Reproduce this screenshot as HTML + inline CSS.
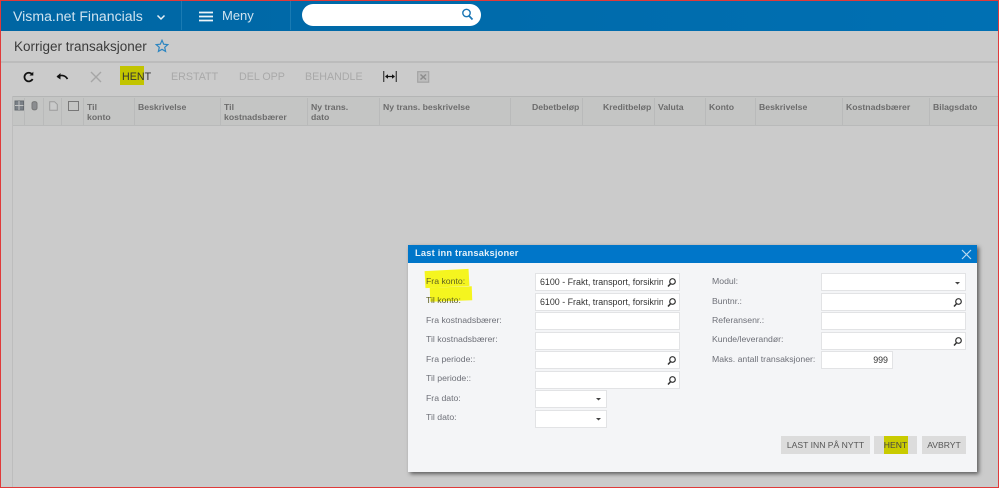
<!DOCTYPE html>
<html><head><meta charset="utf-8"><style>
html,body{margin:0;padding:0}
body{width:999px;height:488px;overflow:hidden;position:relative;background:#cbcbcb;font-family:"Liberation Sans",sans-serif}
.a{position:absolute;white-space:nowrap}
.th{position:absolute;top:102px;font-size:8.7px;line-height:10px;font-weight:bold;color:#6c6c6c;white-space:nowrap}
.sep{position:absolute;top:98px;height:27px;width:1px;background:#b9baba}
.tb{position:absolute;top:71px;font-size:10.7px;line-height:13px;color:#a9a9a9;white-space:nowrap}
.lb{position:absolute;font-size:8.7px;line-height:12px;color:#6e7078;white-space:nowrap}
.in{position:absolute;box-sizing:border-box;height:18px;background:#fff;border:1px solid #e2e3e5;font-size:8.9px;line-height:16px;color:#333;padding-left:4px;overflow:hidden;white-space:nowrap}
.btn{position:absolute;top:436px;height:18px;background:#dcdcdc;font-size:8.6px;line-height:18px;color:#555;text-align:center;white-space:nowrap}
</style></head><body>
<div class="a" style="left:0;top:0;width:999px;height:31px;background:linear-gradient(90deg,#0066a3,#0070b3)"></div>
<div class="a" style="left:181px;top:1px;width:1px;height:29px;background:#1a7bb3"></div>
<div class="a" style="left:290px;top:1px;width:1px;height:29px;background:#1a7bb3"></div>
<div class="a" style="left:13px;top:7px;font-size:14.1px;line-height:18px;color:#cfe3f0">Visma.net Financials</div>
<svg class="a" style="left:156px;top:14px" width="10" height="7"><path d="M1.500 1.500L5 5L8.500 1.500" fill="none" stroke="#e6f0f6" stroke-width="1.500"/></svg>
<svg class="a" style="left:199px;top:11px" width="14" height="11"><path d="M0 1.500H14M0 5.500H14M0 9.500H14" stroke="#eef5f9" stroke-width="1.800"/></svg>
<div class="a" style="left:222px;top:7px;font-size:13px;line-height:18px;color:#cfe3f0">Meny</div>
<div class="a" style="left:302px;top:4px;width:179px;height:22px;border-radius:11px;background:#fff"></div>
<svg class="a" style="left:461px;top:8px" width="13" height="13"><circle cx="5.500" cy="5" r="3.700" fill="none" stroke="#1a76b5" stroke-width="1.400"/><path d="M8.200 8L11.500 11.500" stroke="#1a76b5" stroke-width="1.700"/></svg>

<div class="a" style="left:14px;top:38px;font-size:13.5px;line-height:17px;color:#3b3b3b">Korriger transaksjoner</div>
<svg class="a" style="left:155px;top:39px" width="14" height="14"><path d="M7 1.300L8.700 5.200L12.800 5.600L9.700 8.300L10.600 12.400L7 10.300L3.400 12.400L4.300 8.300L1.200 5.600L5.300 5.200Z" fill="none" stroke="#2e86c1" stroke-width="1.200"/></svg>
<div class="a" style="left:0;top:61px;width:999px;height:2px;background:#bcbcbc"></div>

<svg class="a" style="left:22px;top:71px" width="13" height="13"><path d="M10 3.200A4.300 4.300 0 1 0 10.600 8" fill="none" stroke="#111" stroke-width="1.800"/><path d="M7.500 4.500H11.300V0.800Z" fill="#111"/></svg>
<svg class="a" style="left:56px;top:72px" width="13" height="10"><path d="M1.500 4.500C5 2.800 9 3 11.500 7" fill="none" stroke="#111" stroke-width="1.700"/><path d="M0.500 4.800L4.500 1V7.500Z" fill="#111"/></svg>
<svg class="a" style="left:90px;top:71px" width="12" height="12"><path d="M1 1L11 11M11 1L1 11" stroke="#a6a6a6" stroke-width="1.400"/></svg>
<div class="a" style="left:120px;top:66px;width:24px;height:19px;background:#c2c400"></div>
<div class="tb" style="left:122px;color:#333">HENT</div>
<div class="tb" style="left:171px">ERSTATT</div>
<div class="tb" style="left:239px">DEL OPP</div>
<div class="tb" style="left:305px">BEHANDLE</div>
<svg class="a" style="left:383px;top:70px" width="14" height="13"><path d="M0.700 1V12M13.300 1V12" stroke="#444" stroke-width="1.300"/><path d="M2.500 6.500H11.500" stroke="#111" stroke-width="1.200"/><path d="M2 6.500L5 4.200V8.800ZM12 6.500L9 4.200V8.800Z" fill="#111"/></svg>
<svg class="a" style="left:417px;top:71px" width="13" height="12"><rect x=".7" y=".7" width="11" height="10.500" fill="#bdbdbd" stroke="#a3a3a3" stroke-width="1.200"/><path d="M3.500 3.500L9 8.500M9 3.500L3.500 8.500" stroke="#8d8d8d" stroke-width="1.500"/></svg>

<div class="a" style="left:12px;top:96px;width:986px;height:30px;background:#c4c5c4;border-top:1px solid #b4b5b5;border-bottom:1px solid #b9baba;box-sizing:border-box"></div>
<div class="a" style="left:12px;top:96px;width:1px;height:392px;background:#bdbdbd"></div>
<div class="sep" style="left:24px"></div><div class="sep" style="left:43px"></div><div class="sep" style="left:61px"></div><div class="sep" style="left:83px"></div><div class="sep" style="left:134px"></div><div class="sep" style="left:220px"></div><div class="sep" style="left:307px"></div><div class="sep" style="left:379px"></div><div class="sep" style="left:510px"></div><div class="sep" style="left:582px"></div><div class="sep" style="left:654px"></div><div class="sep" style="left:705px"></div><div class="sep" style="left:755px"></div><div class="sep" style="left:842px"></div><div class="sep" style="left:929px"></div>
<svg class="a" style="left:14px;top:100px" width="11" height="11"><rect x="1" y="1" width="8.500" height="9" fill="#7a8087" stroke="#666b70"/><path d="M5 1V10M1 5.500H9.500" stroke="#c4c5c4"/></svg>
<svg class="a" style="left:30px;top:100px" width="9" height="11"><path d="M2 3.500C2 1 7 1 7 3.500V8C7 10.500 2 10.500 2 8Z" fill="#8b8d90" stroke="#777"/></svg>
<svg class="a" style="left:49px;top:101px" width="9" height="10"><path d="M.7.700H5.500L8.300 3.400V9.300H.7Z" fill="#c9caca" stroke="#9b9c9c"/></svg>
<div class="a" style="left:68px;top:101px;width:9px;height:8px;border:1px solid #777"></div>
<div class="th" style="left:87px">Til<br>konto</div>
<div class="th" style="left:138px">Beskrivelse</div>
<div class="th" style="left:224px">Til<br>kostnadsbærer</div>
<div class="th" style="left:311px">Ny trans.<br>dato</div>
<div class="th" style="left:383px">Ny trans. beskrivelse</div>
<div class="th" style="left:532px">Debetbeløp</div>
<div class="th" style="left:603px">Kreditbeløp</div>
<div class="th" style="left:658px">Valuta</div>
<div class="th" style="left:709px">Konto</div>
<div class="th" style="left:759px">Beskrivelse</div>
<div class="th" style="left:846px">Kostnadsbærer</div>
<div class="th" style="left:933px">Bilagsdato</div>

<div class="a" style="left:408px;top:245px;width:569px;height:227px;background:#f4f5f7;box-shadow:2px 2px 4px rgba(0,0,0,.55)"></div>
<div class="a" style="left:408px;top:245px;width:569px;height:18px;background:#0076c9"></div>
<div class="a" style="left:415px;top:247px;font-size:9.3px;line-height:13px;font-weight:bold;color:#e4f0f8;letter-spacing:.2px">Last inn transaksjoner</div>
<svg class="a" style="left:961px;top:249px" width="11" height="11"><path d="M1 1L10 10M10 1L1 10" stroke="#b9d9ef" stroke-width="1.200"/></svg>

<div class="a" style="left:425px;top:270px;width:44px;height:17px;background:#f5f51f;transform:rotate(-3deg)"></div>
<div class="a" style="left:430px;top:287px;width:42px;height:14px;background:#f5f51f;transform:rotate(-2deg)"></div>
<div class="lb" style="left:426px;top:275px;color:#5f6020">Fra konto:</div>
<div class="lb" style="left:426px;top:294px;color:#5f6020">Til konto:</div>
<div class="lb" style="left:426px;top:314px">Fra kostnadsbærer:</div>
<div class="lb" style="left:426px;top:333px">Til kostnadsbærer:</div>
<div class="lb" style="left:426px;top:353px">Fra periode::</div>
<div class="lb" style="left:426px;top:372px">Til periode::</div>
<div class="lb" style="left:426px;top:392px">Fra dato:</div>
<div class="lb" style="left:426px;top:411px">Til dato:</div>

<div class="in" style="left:535px;top:273px;width:145px"><span style="display:block;width:123px;overflow:hidden">6100 - Frakt, transport, forsikring</span></div>
<div class="in" style="left:535px;top:293px;width:145px"><span style="display:block;width:123px;overflow:hidden">6100 - Frakt, transport, forsikring</span></div>
<div class="in" style="left:535px;top:312px;width:145px"></div>
<div class="in" style="left:535px;top:332px;width:145px"></div>
<div class="in" style="left:535px;top:351px;width:145px"></div>
<div class="in" style="left:535px;top:371px;width:145px"></div>
<div class="in" style="left:535px;top:390px;width:72px"></div>
<div class="in" style="left:535px;top:410px;width:72px"></div>

<div class="lb" style="left:712px;top:275px">Modul:</div>
<div class="lb" style="left:712px;top:295px">Buntnr.:</div>
<div class="lb" style="left:712px;top:314px">Referansenr.:</div>
<div class="lb" style="left:712px;top:333px">Kunde/leverandør:</div>
<div class="lb" style="left:712px;top:353px">Maks. antall transaksjoner:</div>
<div class="in" style="left:821px;top:273px;width:145px"></div>
<div class="in" style="left:821px;top:293px;width:145px"></div>
<div class="in" style="left:821px;top:312px;width:145px"></div>
<div class="in" style="left:821px;top:332px;width:145px"></div>
<div class="in" style="left:821px;top:351px;width:72px;text-align:right;padding-right:4px">999</div>

<svg class="a" style="left:0;top:0;pointer-events:none" width="999" height="488">
<defs><g id="m"><circle cx="5.500" cy="4.500" r="2.800" fill="none" stroke="#333" stroke-width="1.200"/><path d="M3.500 6.700L1 9.500" stroke="#333" stroke-width="1.500"/></g>
<path id="t" d="M0 0H5L2.500 2.500Z" fill="#444"/></defs>
<use href="#m" x="667" y="277"/><use href="#m" x="667" y="297"/><use href="#m" x="667" y="355"/><use href="#m" x="667" y="375"/>
<use href="#m" x="953" y="297"/><use href="#m" x="953" y="336"/>
<use href="#t" x="596" y="398"/><use href="#t" x="596" y="418"/><use href="#t" x="955" y="282"/>
</svg>

<div class="btn" style="left:781px;width:89px">LAST INN PÅ NYTT</div>
<div class="btn" style="left:874px;width:43px"><span style="background:#c9cb00;display:inline-block;width:24px;height:18px;color:#444">HENT</span></div>
<div class="btn" style="left:922px;width:44px">AVBRYT</div>

<div class="a" style="left:0;top:0;width:997px;height:486px;border:1px solid #e03a3a"></div>
</body></html>
